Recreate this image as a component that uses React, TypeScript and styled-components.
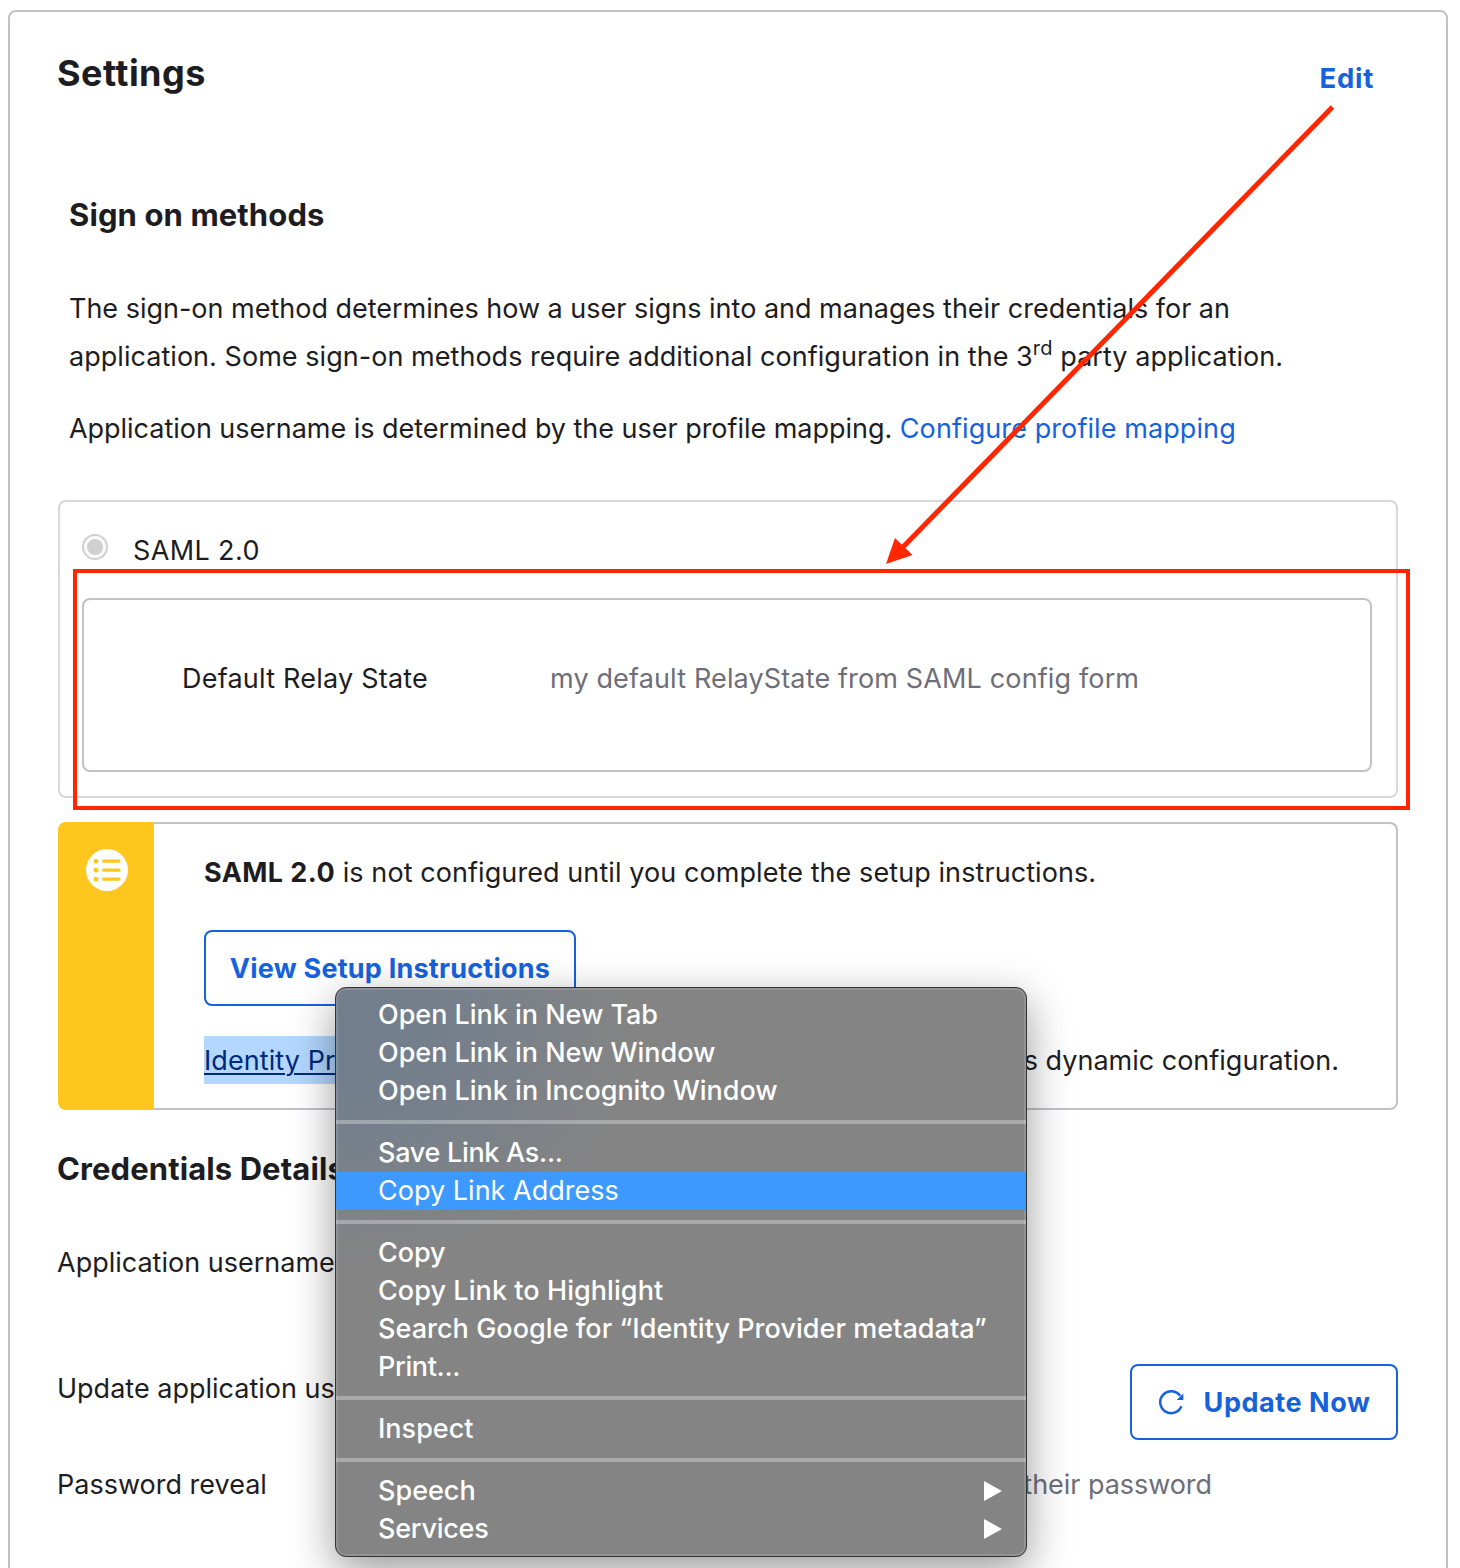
import React from 'react';
import styled, { createGlobalStyle } from 'styled-components';

const GlobalStyle = createGlobalStyle`
  *, *::before, *::after { box-sizing: border-box; }
  html, body { margin: 0; padding: 0; background: #fff; }
  body { overflow: hidden; }
`;

const Page = styled.div`
  position: relative;
  height: 1568px;
  padding: 10px 12px 0 8px;
  overflow: hidden;
  background: #fff;
  color: #1d1d21;
  font-family: Inter, "Liberation Sans", sans-serif;
  font-size: 27px;
  line-height: 48px;
`;

const Panel = styled.section`
  display: flex;
  flex-direction: column;
  height: 1600px;
  padding: 0 48px;
  border: 2px solid #c1c1c8;
  border-radius: 8px;
`;

const Header = styled.header`
  display: flex;
  justify-content: space-between;
  height: 183px;
`;

const Title = styled.h1`
  margin: 37px 0 0 -1px;
  font-size: 36px;
  font-weight: 700;
  letter-spacing: 0.45px;
`;

const EditLink = styled.a`
  margin: 42px 24px 0 0;
  color: #1662dd;
  font-weight: 700;
  font-size: 27.5px;
  letter-spacing: 0.75px;
`;

const Methods = styled.div`
  padding-left: 11px;
`;

const Heading = styled.h2<{ $top?: number; $left?: number }>`
  margin: ${({ $top = 0 }) => $top}px 0 0 ${({ $left = 0 }) => $left}px;
  font-size: 31px;
  font-weight: 700;
  line-height: 40px;
  letter-spacing: 0.1px;
`;

const Paragraph = styled.p<{ $top: number }>`
  margin: ${({ $top }) => $top}px 0 0;
  white-space: nowrap;
`;

const Line = styled.span<{ $spacing: number }>`
  letter-spacing: ${({ $spacing }) => $spacing}px;
`;

const Sup = styled.sup`
  font-size: 20px;
  line-height: 0;
  vertical-align: 11px;
  letter-spacing: 0.2px;
`;

const Link = styled.a`
  color: #1662dd;
  letter-spacing: 0.09px;
`;

const MethodBox = styled.div`
  display: flex;
  flex-direction: column;
  height: 298px;
  margin-top: 47px;
  padding: 0 24px 24px 22px;
  border: 2px solid #d7d7dc;
  border-radius: 8px;
`;

const Option = styled.label`
  display: flex;
  gap: 25px;
  height: 96px;
  letter-spacing: 0.38px;
`;

const Radio = styled.span`
  display: grid;
  place-items: center;
  width: 26px;
  height: 26px;
  margin-top: 32px;
  border: 2px solid #d0d0d0;
  border-radius: 50%;
  background: #fafafa;

  &::after {
    content: '';
    width: 16px;
    height: 16px;
    border-radius: 50%;
    background: #d0d0d0;
  }
`;

const OptionLabel = styled.span`
  margin-top: 25px;
`;

const RelayBox = styled.div`
  display: flex;
  height: 174px;
  padding: 55px 0 0 98px;
  border: 2px solid #c1c1c8;
  border-radius: 8px;
`;

const RelayLabel = styled.span`
  width: 368px;
  letter-spacing: 0.22px;
`;

const Muted = styled.span`
  color: #6e6e78;
  letter-spacing: 0.14px;
`;

const Notice = styled.div`
  display: flex;
  height: 288px;
  margin-top: 24px;
  border-radius: 8px;
`;

const NoticeStripe = styled.div`
  display: flex;
  justify-content: center;
  width: 96px;
  padding: 27px 0 0 2px;
  border-radius: 8px 0 0 8px;
  background: #ffc61e;
`;

const NoticeBody = styled.div`
  display: flex;
  flex: 1;
  flex-direction: column;
  align-items: flex-start;
  padding: 25px 0 0 50px;
  border: 2px solid #c1c1c8;
  border-left: 0;
  border-radius: 0 8px 8px 0;
`;

const NoticeText = styled.p`
  margin: 0;
  white-space: nowrap;
  letter-spacing: 0.08px;
`;

const Strong = styled.strong`
  font-weight: 700;
  letter-spacing: 0.42px;
`;

const MetadataLine = styled.div`
  display: flex;
  justify-content: space-between;
  align-self: stretch;
  height: 48px;
  margin-top: 30px;
  padding-right: 57px;
  line-height: 50px;
  white-space: nowrap;
`;

const SelectedLink = styled.a`
  width: 330px;
  height: 48px;
  background: #b3d7ff;
  color: #00297a;
  letter-spacing: 0.08px;
  text-decoration: underline;
  text-decoration-thickness: 2px;
  text-underline-offset: 3px;
`;

const Button = styled.button<{ $width: number; $top?: number }>`
  display: flex;
  align-items: center;
  justify-content: center;
  gap: 20px;
  width: ${({ $width }) => $width}px;
  height: 76px;
  margin: ${({ $top = 0 }) => $top}px 0 0;
  padding: 2px 0 0;
  border: 2px solid #1662dd;
  border-radius: 8px;
  background: #fff;
  color: #1662dd;
  font: 700 27px/48px Inter, "Liberation Sans", sans-serif;
  letter-spacing: 0.22px;
`;

const UpdateButton = styled(Button)`
  letter-spacing: 0.55px;

  svg {
    margin-top: -2px;
  }
`;

const Row = styled.div<{ $top: number; $height?: number }>`
  display: flex;
  justify-content: space-between;
  height: ${({ $height = 48 }) => $height}px;
  margin: ${({ $top }) => $top}px 0 0 -1px;
  white-space: nowrap;
`;

const RowLabel = styled.span<{ $top?: number }>`
  margin-top: ${({ $top = 0 }) => $top}px;
`;

const RowValue = styled(Muted)`
  margin-right: 186px;
  letter-spacing: -0.05px;
`;

const HighlightFrame = styled.div`
  position: absolute;
  top: 569px;
  left: 73px;
  width: 1337px;
  height: 241px;
  border: 4px solid #ff2600;
`;

const Arrow = styled.svg`
  position: absolute;
  top: 100px;
  left: 880px;
`;

const Menu = styled.div`
  position: absolute;
  top: 987px;
  left: 335px;
  width: 692px;
  height: 570px;
  padding: 8px 0;
  border: 1px solid #333;
  border-radius: 11px;
  background:
    radial-gradient(ellipse 300px 230px at 0 50px, #717e8e 0%, rgba(113, 126, 142, 0.75) 40%, rgba(132, 132, 132, 0) 100%),
    #848484;
  box-shadow: inset 0 0 0 2px rgba(255, 255, 255, 0.13), 0 14px 44px rgba(0, 0, 0, 0.4);
  color: #fff;
  font-weight: 500;
`;

const MenuItem = styled.div<{ $active?: boolean; $spacing?: number }>`
  display: flex;
  align-items: center;
  justify-content: space-between;
  height: 38px;
  padding: 0 24px 0 42px;
  background: ${({ $active }) => ($active ? '#3e99ff' : 'transparent')};
  font-weight: ${({ $active }) => ($active ? 400 : 500)};
  letter-spacing: ${({ $spacing = 0 }) => $spacing}px;
  line-height: 38px;
`;

const Separator = styled.div`
  height: 4px;
  margin: 10px 0;
  background: rgba(255, 255, 255, 0.3);
`;

const ListIcon = () => (
  <svg width="42" height="42" viewBox="0 0 42 42">
    <circle cx="21" cy="21" r="21" fill="#fff" />
    <g fill="#ffc61e">
      <circle cx="10" cy="12.2" r="2.4" />
      <circle cx="10" cy="21.2" r="2.4" />
      <circle cx="10" cy="30.2" r="2.4" />
    </g>
    <path d="M17.7 12.2H33M17.7 21.2H33M17.7 30.2H33" stroke="#ffc61e" strokeWidth="3.2" strokeLinecap="round" />
  </svg>
);

const RefreshIcon = () => (
  <svg width="26" height="26" viewBox="0 0 26 26" fill="none">
    <path d="M23.4 17.3A11 11 0 1 1 22.2 6.8" stroke="#1662dd" strokeWidth="2.5" />
    <path d="M25.3 4.4V11H18.6Z" fill="#1662dd" />
  </svg>
);

const Triangle = () => (
  <svg width="18" height="20" viewBox="0 0 18 20">
    <path d="M0 0L18 10L0 20Z" fill="#fff" />
  </svg>
);

type Entry = { label: string; spacing?: number; active?: boolean; sub?: boolean };

const menuGroups: Entry[][] = [
  [
    { label: 'Open Link in New Tab', spacing: -0.03 },
    { label: 'Open Link in New Window', spacing: -0.03 },
    { label: 'Open Link in Incognito Window', spacing: -0.02 },
  ],
  [{ label: 'Save Link As...', spacing: -0.3 }, { label: 'Copy Link Address', active: true, spacing: 0.02 }],
  [
    { label: 'Copy', spacing: -0.1 },
    { label: 'Copy Link to Highlight', spacing: 0.07 },
    { label: 'Search Google for “Identity Provider metadata”', spacing: 0.04 },
    { label: 'Print...', spacing: -0.35 },
  ],
  [{ label: 'Inspect' }],
  [
    { label: 'Speech', sub: true },
    { label: 'Services', sub: true, spacing: -0.25 },
  ],
];

export default function App() {
  return (
    <Page>
      <GlobalStyle />
      <Panel>
        <Header>
          <Title>Settings</Title>
          <EditLink>Edit</EditLink>
        </Header>
        <Methods>
          <Heading>Sign on methods</Heading>
          <Paragraph $top={50}>
            <Line $spacing={-0.01}>
              The sign-on method determines how a user signs into and manages their credentials for an
            </Line>
            <br />
            <Line $spacing={0.04}>
              application. Some sign-on methods require additional configuration in the 3<Sup>rd</Sup> party application.
            </Line>
          </Paragraph>
          <Paragraph $top={24}>
            <Line $spacing={-0.03}>Application username is determined by the user profile mapping. </Line>
            <Link>Configure profile mapping</Link>
          </Paragraph>
        </Methods>
        <MethodBox>
          <Option>
            <Radio />
            <OptionLabel>SAML 2.0</OptionLabel>
          </Option>
          <RelayBox>
            <RelayLabel>Default Relay State</RelayLabel>
            <Muted>my default RelayState from SAML config form</Muted>
          </RelayBox>
        </MethodBox>
        <Notice>
          <NoticeStripe>
            <ListIcon />
          </NoticeStripe>
          <NoticeBody>
            <NoticeText>
              <Strong>SAML 2.0</Strong> is not configured until you complete the setup instructions.
            </NoticeText>
            <Button $width={372} $top={33}>
              View Setup Instructions
            </Button>
            <MetadataLine>
              <SelectedLink>Identity Pr</SelectedLink>
              <span>s dynamic configuration.</span>
            </MetadataLine>
          </NoticeBody>
        </Notice>
        <Heading $top={39} $left={-1}>
          Credentials Details
        </Heading>
        <Row $top={50}>
          <RowLabel>Application username</RowLabel>
        </Row>
        <Row $top={77} $height={76}>
          <RowLabel $top={1}>Update application us</RowLabel>
          <UpdateButton $width={268}>
            <RefreshIcon />
            Update Now
          </UpdateButton>
        </Row>
        <Row $top={21}>
          <RowLabel>Password reveal</RowLabel>
          <RowValue>their password</RowValue>
        </Row>
      </Panel>
      <HighlightFrame />
      <Arrow width="460" height="470" viewBox="880 100 460 470">
        <path d="M1332.5 107L903 547" stroke="#ff2600" strokeWidth="5" />
        <path d="M886 564L895 538L912.5 555Z" fill="#ff2600" />
      </Arrow>
      <Menu>
        {menuGroups.map((group, index) => (
          <React.Fragment key={index}>
            {index > 0 && <Separator />}
            {group.map((entry) => (
              <MenuItem key={entry.label} $active={entry.active} $spacing={entry.spacing}>
                <span>{entry.label}</span>
                {entry.sub && <Triangle />}
              </MenuItem>
            ))}
          </React.Fragment>
        ))}
      </Menu>
    </Page>
  );
}
